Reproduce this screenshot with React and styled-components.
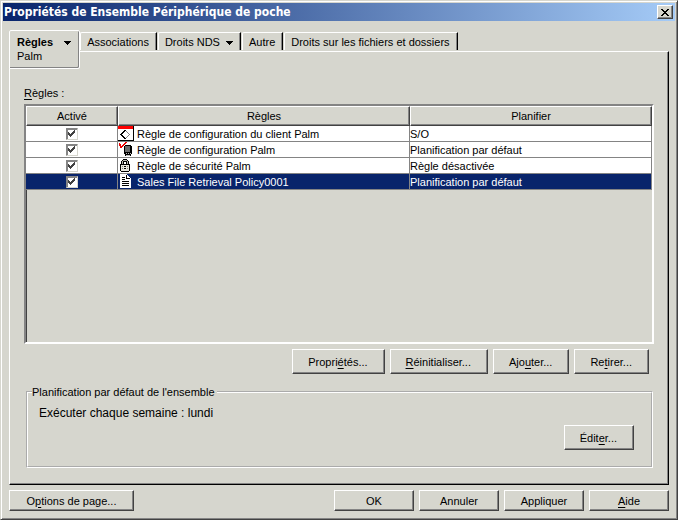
import { useState } from "react"
import styled, { createGlobalStyle, css } from "styled-components"

const FACE = "#d6d6ce"
const NAVY = "#08246b"

const initialRules = [
	{ id: 1, name: "Règle de configuration du client Palm", plan: "S/O", Icon: ClientIcon },
	{ id: 2, name: "Règle de configuration Palm", plan: "Planification par défaut", Icon: DeviceIcon },
	{ id: 3, name: "Règle de sécurité Palm", plan: "Règle désactivée", Icon: LockIcon },
	{ id: 4, name: "Sales File Retrieval Policy0001", plan: "Planification par défaut", Icon: PageIcon },
]

const App = () => {
	const [selected, setSelected] = useState(4)
	const [enabled, setEnabled] = useState({ 1: true, 2: true, 3: true, 4: true })

	const toggle = (id) => setEnabled({ ...enabled, [id]: !enabled[id] })

	return (
		<>
			<GlobalStyle />
			<Window>
				<TitleBar>
					<h1>Propriétés de Ensemble Périphérique de poche</h1>
					<CloseButton type="button" aria-label="Fermer">
						<svg width="8" height="7" viewBox="0 0 8 7" shapeRendering="crispEdges">
							<path d="M0 0h2v1h1v1h2v-1h1v-1h2v1h-1v1h-1v1h-1v1h1v1h1v1h1v1h-2v-1h-1v-1h-2v1h-1v1h-2v-1h1v-1h1v-1h1v-1h-1v-1h-1v-1h-1z" />
						</svg>
					</CloseButton>
				</TitleBar>

				<Content>
					<Tabs>
						<ActiveTab type="button">
							<strong>Règles <Arrow /></strong>
							<span>Palm</span>
						</ActiveTab>
						<Tab type="button">Associations</Tab>
						<Tab type="button">Droits NDS <Arrow /></Tab>
						<Tab type="button">Autre</Tab>
						<Tab type="button">Droits sur les fichiers et dossiers</Tab>
					</Tabs>

					<Pane>
						<TableLabel id="rules-label"><u>R</u>ègles :</TableLabel>
						<TableFrame>
							<RulesTable aria-labelledby="rules-label">
								<colgroup>
									<Column $share={92} />
									<Column $share={292} />
									<Column $share={242} />
								</colgroup>
								<thead>
									<tr>
										<th>Activé</th>
										<th>Règles</th>
										<th>Planifier</th>
									</tr>
								</thead>
								<tbody>
									{initialRules.map(({ id, name, plan, Icon }) => (
										<RuleRow key={id} $selected={id === selected} onClick={() => setSelected(id)}>
											<td>
												<Check>
													<input
														type="checkbox"
														aria-label={name}
														checked={enabled[id]}
														onChange={() => toggle(id)}
													/>
													{enabled[id] && <CheckMark />}
												</Check>
											</td>
											<td>
												<RuleName>
													<Icon />
													{name}
												</RuleName>
											</td>
											<td>{plan}</td>
										</RuleRow>
									))}
								</tbody>
							</RulesTable>
						</TableFrame>

						<TableActions>
							<Button type="button">Propri<u>é</u>tés...</Button>
							<Button type="button"><u>R</u>éinitialiser...</Button>
							<Button type="button">Ajo<u>u</u>ter...</Button>
							<Button type="button">Re<u>t</u>irer...</Button>
						</TableActions>

						<Schedule>
							<legend>Planification par défaut de l'ensemble</legend>
							<p>Exécuter chaque semaine : lundi</p>
							<Button type="button">Édit<u>e</u>r...</Button>
						</Schedule>
					</Pane>

					<Footer>
						<FooterButton type="button" $wide>O<u>p</u>tions de page...</FooterButton>
						<FooterButton type="button">OK</FooterButton>
						<FooterButton type="button">Annuler</FooterButton>
						<FooterButton type="button">Appliquer</FooterButton>
						<FooterButton type="button"><u>A</u>ide</FooterButton>
					</Footer>
				</Content>
			</Window>
		</>
	)
}

export default App

function Arrow() {
	return (
		<svg width="7" height="4" viewBox="0 0 7 4" shapeRendering="crispEdges">
			<path d="M0 0h7v1h-1v1h-1v1h-1v1h-1v-1h-1v-1h-1v-1h-1z" />
		</svg>
	)
}

function CheckMark() {
	return (
		<svg width="7" height="7" viewBox="0 0 7 7" shapeRendering="crispEdges">
			<path
				fill="#424242"
				d="M0 2h1v1h1v1h1v-1h1v-1h1v-1h1v-1h1v3h-1v1h-1v1h-1v1h-1v1h-1v-1h-1v-1h-1z"
			/>
		</svg>
	)
}

function ClientIcon() {
	return (
		<svg width="16" height="15" viewBox="0 0 16 15" shapeRendering="crispEdges">
			<path fill="#fff" d="M0 0h15v14h-15z" />
			<path fill="#f00" d="M0 0h15v3h-15z" />
			<path d="M15 0h1v15h-16v-1h15z" />
			<path
				fill="#848484"
				d="M8 5h1v1h-1zM9 6h1v1h-1zM10 7h1v1h-1zM11 8h1v1h-1zM10 9h1v1h-1zM9 10h1v1h-1zM8 11h1v1h-1z"
			/>
			<path d="M6 4h2v1h-2zM5 5h2v1h-2zM4 6h2v1h-2zM3 7h2v1h-2zM2 8h2v1h-2zM3 9h2v1h-2zM4 10h2v1h-2zM5 11h2v1h-2zM6 12h2v1h-2z" />
		</svg>
	)
}

function DeviceIcon() {
	return (
		<svg width="16" height="15" viewBox="0 0 16 15" shapeRendering="crispEdges">
			<path fill="#e00" d="M1 1h1v1h1v2h1v-1h1v-1h1v-1h1v-1h2v1h-1v1h-1v1h-1v1h-1v1h-1v1h-2v-2h-1z" />
			<path d="M7 3h6v1h1v8h-1v2h-6v-2h-1v-8h1z" />
			<path fill="#6b6b6b" d="M7 4h5v6h-5z" />
			<path fill="#bdbdbd" d="M8 11h1v1h-1zM10 11h1v1h-1zM12 11h1v1h-1zM8 13h4v1h-4z" />
		</svg>
	)
}

function LockIcon() {
	return (
		<svg width="16" height="15" viewBox="0 0 16 15" shapeRendering="crispEdges">
			<path d="M5 1h4v1h1v1h1v3h1v7h-1v1h-8v-1h-1v-7h1v-3h1v-1h1z" />
			<path fill="#b5b5ad" d="M5 2h4v1h-4zM4 3h1v3h-1zM9 3h1v3h-1z" />
			<path fill="#fff" d="M6 4h2v2h-2z" />
			<path fill="#e7e7de" d="M3 7h8v6h-8z" />
			<path fill="#848484" d="M9 8h1v1h-1zM9 10h1v1h-1zM4 8h1v1h-1zM4 10h1v1h-1z" />
			<path d="M6 8h2v1h-2zM6 10h2v1h-2z" />
		</svg>
	)
}

function PageIcon() {
	return (
		<svg width="16" height="15" viewBox="0 0 16 15" shapeRendering="crispEdges">
			<path fill="#fff" d="M2 0h7v1h1v1h1v1h1v1h1v10h-11z" />
			<path d="M8 1h1v3h3v1h-4zM4 3h3v1h-3zM4 5h3v1h-3zM4 7h7v1h-7zM4 9h7v1h-7zM4 11h7v1h-7z" />
		</svg>
	)
}

const GlobalStyle = createGlobalStyle`
* {
	box-sizing: border-box;
}

body {
	margin: 0;
	background: ${FACE};
	color: #000;
	font: 11px/14px "Liberation Sans", Arial, sans-serif;
}

u {
	text-underline-offset: 2px;
}
`

const raised = css`
	background: ${FACE};
	border: 1px solid;
	border-color: #fff #424242 #424242 #fff;
	box-shadow: inset -1px -1px #848484;
`

const Window = styled.main`
	display: flex;
	flex-direction: column;
	min-height: 100vh;
	padding: 2px;
	border: 1px solid;
	border-color: ${FACE} #424242 #424242 ${FACE};
	box-shadow: inset 1px 1px #fff, inset -1px -1px #848484;
	background: ${FACE};
`

const TitleBar = styled.header`
	display: flex;
	align-items: center;
	justify-content: space-between;
	height: 18px;
	padding: 0 2px 0 1px;
	background: linear-gradient(to right, ${NAVY}, #a5cbf7);

	> h1 {
		margin: 0;
		color: #fff;
		font: bold 12px/18px "DejaVu Sans Condensed", Tahoma, sans-serif;
	}
`

const CloseButton = styled.button`
	${raised}
	display: flex;
	align-items: center;
	justify-content: center;
	width: 16px;
	height: 14px;
	padding: 0;
`

const Content = styled.div`
	display: flex;
	flex: 1;
	flex-direction: column;
	padding: 9px 6px 6px;
`

const Tabs = styled.nav`
	display: flex;
	align-items: flex-start;
	height: 21px;
`

const Tab = styled.button`
	height: 18px;
	margin: 2px 1px 0 0;
	padding: 0 7px 0 6px;
	border: 1px solid;
	border-color: #fff #000 transparent #fff;
	border-bottom: 0;
	border-radius: 2px 0 0 0;
	box-shadow: inset -1px 0 #848484;
	background: ${FACE};
	font: inherit;
	white-space: nowrap;

	> svg {
		margin: 0 0 1px 3px;
	}
`

/* hangs over the top edge of the pane */
const ActiveTab = styled(Tab)`
	position: relative;
	display: flex;
	flex-direction: column;
	align-items: flex-start;
	height: 39px;
	margin: 0;
	padding: 4px 8px 0 7px;
	border: 1px solid #fff;
	border-radius: 2px 2px 2px 0;
	box-shadow: inset -1px -1px #848484;
	text-align: left;

	> strong svg {
		margin: 0 0 1px 8px;
	}
`

const Pane = styled.section`
	display: flex;
	flex: 1;
	flex-direction: column;
	padding: 34px 14px 16px;
	border: 1px solid;
	border-color: #fff #000 #000 #fff;
	box-shadow: inset -1px -1px #848484;
`

const TableLabel = styled.div`
	margin-bottom: 4px;
`

const TableFrame = styled.div`
	flex: 1;
	border: 2px solid;
	border-color: #848484 #fff #fff #848484;
	box-shadow: inset 1px 1px #424242;
`

const RulesTable = styled.table`
	width: 100%;
	border-collapse: separate;
	border-spacing: 0;
	table-layout: fixed;

	th {
		${raised}
		height: 20px;
		padding: 0;
		font-weight: normal;
	}

	td {
		height: 16px;
		padding: 0;
		border: solid #848484;
		border-width: 0 1px 1px 0;
		white-space: nowrap;
	}
`

const Column = styled.col`
	width: calc(100% * ${(props) => props.$share} / 626);
`

const RuleRow = styled.tr`
	background: ${(props) => (props.$selected ? NAVY : "#fff")};
	color: ${(props) => (props.$selected ? "#fff" : "#000")};
`

const Check = styled.span`
	display: grid;
	place-items: center;
	height: 15px;

	> input {
		grid-area: 1 / 1;
		width: 12px;
		height: 12px;
		margin: 0;
		appearance: none;
		border: 1px solid;
		border-color: #848484 #d6d6ce #d6d6ce #848484;
		box-shadow: inset 1px 1px #848484;
		background: #fff;
	}

	> svg {
		grid-area: 1 / 1;
		z-index: 1;
		pointer-events: none;
	}
`

const RuleName = styled.span`
	display: flex;
	align-items: center;
	gap: 3px;
	height: 15px;
`

const TableActions = styled.div`
	display: flex;
	justify-content: flex-end;
	gap: 5px;
	margin: 5px 5px 0 0;
`

const Button = styled.button`
	${raised}
	height: 25px;
	padding: 0 16px 0 15px;
	font: inherit;
	white-space: nowrap;
`

const Schedule = styled.fieldset`
	display: flex;
	flex-direction: column;
	min-width: 0;
	margin: 11px 1px 0 2px;
	padding: 6px 17px 16px 11px;
	border: 2px groove #fff;

	> legend {
		margin-left: -7px;
		padding: 0 2px 0 0;
	}

	> p {
		margin: 0 0 4px;
		font-size: 12px;
		line-height: 16px;
	}

	> button {
		align-self: flex-end;
	}
`

const Footer = styled.footer`
	display: flex;
	gap: 5px;
	margin-top: 5px;
`

const FooterButton = styled(Button)`
	width: ${(props) => (props.$wide ? "125px" : "80px")};
	height: 21px;
	margin-right: ${(props) => (props.$wide ? "auto" : "0")};
	padding: 0;
`
